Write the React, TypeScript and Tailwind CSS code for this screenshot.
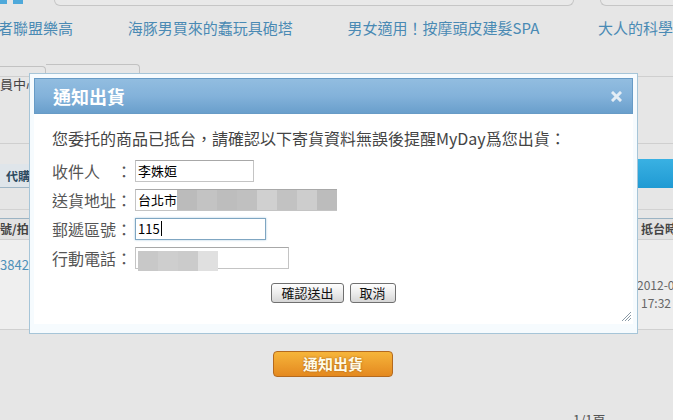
const cjk = "font-['Noto_Sans_CJK_TC','Noto_Sans',sans-serif]";

const addrBlocks = ["#bbbbbb", "#c3c3c3", "#bdbdbd", "#c0c0c0", "#d0d0d0", "#c2c2c2", "#cdcdcd", "#bcbcbc"];
const phoneBlocks = ["#c8c8c8", "#cecece", "#cbcbcb", "#e0e0e0"];

function Field({ label, width, children, focus }: { label: string; width: string; children: React.ReactNode; focus?: boolean }) {
  return (
    <div className="flex h-[29px] items-center">
      <div className="w-[80px] whitespace-pre text-[16px] leading-[20px] text-[#555]">{label}</div>
      <div
        className={`ml-[3px] flex h-[22px] items-center overflow-visible border bg-white pl-[2px] text-[13px] leading-[16px] text-black ${width} ${
          focus ? "border-[#7fa6c2] shadow-[0_0_2px_#a9c9df]" : "border-[#c4c4c4] border-t-[#a8a8a8]"
        }`}
      >
        {children}
      </div>
    </div>
  );
}

function GrayButton({ children }: { children: React.ReactNode }) {
  return (
    <button className="h-[20px] rounded-[3px] border border-[#707070] bg-gradient-to-b from-[#fefefe] via-[#ececec] to-[#d6d6d6] px-[9px] text-[13px] leading-[16px] text-[#111]">
      {children}
    </button>
  );
}

export default function App() {
  return (
    <div className={`relative h-[420px] w-[673px] overflow-hidden bg-[#e6e6e6] ${cjk}`}>
      {/* top strip */}
      <div className="flex h-[6px] items-start">
        <div className="h-[4px] w-[7px] bg-[#4fa9da]" />
        <div className="ml-[6px] h-[4px] w-[10px] bg-[#4fa9da]" />
        <div className="ml-[31px] h-[6px] w-[520px] rounded-b-[7px] border-x border-b border-[#c6c6c6] bg-[#e9e9e9]" />
        <div className="ml-[26px] h-[6px] flex-1 rounded-bl-[7px] border-b border-l border-[#c6c6c6] bg-[#e9e9e9]" />
      </div>

      {/* links */}
      <div className="mt-[10px] flex h-[24px] items-center whitespace-nowrap text-[15px] leading-[24px] text-[#4a8ab4]">
        <span className="-ml-[2px] w-[132px]">者聯盟樂高</span>
        <span className="w-[224px]">海豚男買來的蠢玩具砲塔</span>
        <span className="w-[255px]">男女適用！按摩頭皮建髮SPA</span>
        <span>大人的科學</span>
      </div>

      {/* tabs */}
      <div className="mt-[24px] flex h-[11px] items-end">
        <div className="h-[9px] w-[46px] rounded-tr-[4px] border-r border-t border-[#c2c2c2]" />
        <div className="h-[11px] w-[94px] rounded-tr-[4px] border-r border-t border-[#c2c2c2]" />
      </div>
      <div className="mt-[1px] flex h-[14px] items-center whitespace-nowrap border-t border-[#cfcfcf] text-[13px] leading-[14px] text-[#444]">
        員中心
      </div>

      {/* table area */}
      <div className="mt-[53px] border-t border-[#cfcfcf]">
        <div className="h-[15px]" />
        <div className="flex h-[29px] items-end">
          <div className="flex h-[24px] w-[30px] items-center overflow-hidden whitespace-nowrap border-b border-[#9fb6c6] bg-[#dfe5ea] pl-[6px] text-[12px] font-bold text-[#2d4b61]">
            代購
          </div>
          <div className="h-[29px] flex-1 bg-gradient-to-b from-[#39b1e3] to-[#1f9ad3]" />
        </div>
        <div className="h-[22px] border-b border-[#d2d2d2]" />
        <div className="h-[8px]" />
        <div className="flex h-[22px] items-center justify-between border-y border-t-[#9bb3c3] border-b-[#cfcfcf] bg-[#e2e2e2] text-[12px] font-bold text-[#444]">
          <span className="whitespace-nowrap">號/拍</span>
          <span className="w-[32px] overflow-hidden whitespace-nowrap">抵台時</span>
        </div>
        <div className="flex h-[90px] justify-between border-b border-[#d0d0d0]">
          <div className="w-[50px] bg-[#efefef] pt-[17px] text-[13px] leading-[16px] text-[#4d8fb8]">3842</div>
          <div className="w-[36px] overflow-hidden whitespace-nowrap bg-[#ededed] pt-[36px] text-[12px] leading-[18px] text-[#666]">
            <div>2012-0</div>
            <div className="pl-[4px]">17:32</div>
          </div>
        </div>
      </div>

      {/* notify button */}
      <div className="mt-[21px] flex pl-[273px]">
        <button className="flex h-[26px] w-[120px] items-center justify-center rounded-[4px] border border-[#b46a1f] bg-gradient-to-b from-[#f6b53a] to-[#e4891f] text-[15px] font-bold text-[#fffbe8] [text-shadow:0_0_2px_#9a5a14]">
          通知出貨
        </button>
      </div>
      <div className="mt-[36px] pl-[573px] text-[13px] leading-[14px] text-[#555]">1/1頁</div>

      {/* dialog */}
      <div className="absolute left-[29px] top-[73px] h-[261px] w-[609px] border border-[#a6c5d8] bg-[#f6fbfe] p-[4px]">
        <div className="flex h-[36px] items-center justify-between border border-[#679bc6] bg-gradient-to-b from-[#92bde0] via-[#83b2da] to-[#6a9fcc] pl-[18px] pr-[10px]">
          <span className="text-[18px] font-bold leading-[20px] text-white">通知出貨</span>
          <svg width="11" height="11" viewBox="0 0 11 11">
            <path d="M2 2 L9 9 M9 2 L2 9" stroke="#e4edf5" strokeWidth="3" strokeLinecap="square" />
          </svg>
        </div>
        <div className="relative h-[210px] bg-white pl-[18px]">
          <div className="pt-[14px] text-[16px] leading-[20px] text-[#444]">
            您委托的商品已抵台，請確認以下寄貨資料無誤後提醒MyDay爲您出貨：
          </div>
          <div className="mt-[8px] flex flex-col">
            <Field label="收件人　：" width="w-[119px]">
              李姝姮
            </Field>
            <Field label="送貨地址：" width="w-[202px] border-r-0">
              <span>台北市</span>
              <div className="flex h-[20px]">
                {addrBlocks.map((c, i) => (
                  <div key={i} className="h-[20px] w-[20px]" style={{ backgroundColor: c }} />
                ))}
              </div>
            </Field>
            <Field label="郵遞區號：" width="w-[131px]" focus>
              <span>115</span>
              <span className="ml-[1px] h-[15px] w-[1px] bg-black" />
            </Field>
            <Field label="行動電話：" width="w-[154px]">
              <div className="mt-[6px] flex h-[20px]">
                {phoneBlocks.map((c, i) => (
                  <div key={i} className="h-[20px] w-[20px]" style={{ backgroundColor: c }} />
                ))}
              </div>
            </Field>
          </div>
          <div className="mt-[11px] flex justify-center gap-[6px] pr-[18px]">
            <GrayButton>確認送出</GrayButton>
            <GrayButton>取消</GrayButton>
          </div>
          <svg className="absolute bottom-[2px] right-[1px]" width="11" height="11" viewBox="0 0 11 11">
            <path d="M1 10 L10 1 M4 10 L10 4 M7 10 L10 7" stroke="#8a9aa6" strokeWidth="1" />
          </svg>
        </div>
      </div>
    </div>
  );
}
